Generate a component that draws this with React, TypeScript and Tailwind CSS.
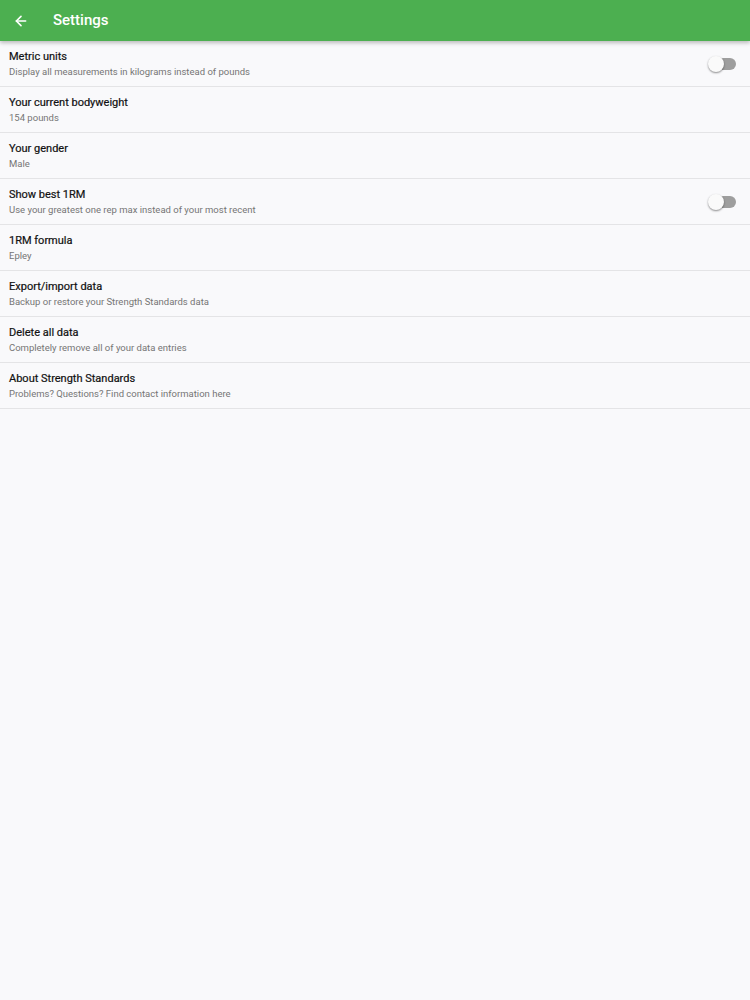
import { ArrowLeft } from "lucide-react";

type Item = { title: string; subtitle: string; toggle?: boolean };

const items: Item[] = [
  { title: "Metric units", subtitle: "Display all measurements in kilograms instead of pounds", toggle: true },
  { title: "Your current bodyweight", subtitle: "154 pounds" },
  { title: "Your gender", subtitle: "Male" },
  { title: "Show best 1RM", subtitle: "Use your greatest one rep max instead of your most recent", toggle: true },
  { title: "1RM formula", subtitle: "Epley" },
  { title: "Export/import data", subtitle: "Backup or restore your Strength Standards data" },
  { title: "Delete all data", subtitle: "Completely remove all of your data entries" },
  { title: "About Strength Standards", subtitle: "Problems? Questions? Find contact information here" },
];

function Toggle() {
  return (
    <div className="relative mr-[14px] h-[12px] w-[26px]">
      <div className="h-[12px] w-[26px] rounded-full bg-[#9e9e9e]" />
      <div className="absolute left-[-2px] top-[-2px] h-[16px] w-[16px] rounded-full bg-[#fafafa] shadow-[0_1px_2px_rgba(0,0,0,0.45)]" />
    </div>
  );
}

export default function App() {
  return (
    <div className="min-h-[1000px] w-[750px] bg-[#f9f9fb] font-['Roboto','Liberation_Sans',sans-serif]">
      {/* Top bar */}
      <header className="relative z-10 flex h-[41px] items-center bg-[#4caf50] shadow-[0_2px_4px_rgba(0,0,0,0.25)]">
        <ArrowLeft className="ml-[13px] h-[16px] w-[16px] text-white" strokeWidth={2.4} />
        <h1 className="ml-[24px] text-[15px] font-medium text-white">Settings</h1>
      </header>

      {/* Settings list */}
      <ul>
        {items.map((item) => (
          <li
            key={item.title}
            className="flex h-[46px] items-center justify-between border-b border-[#e4e4e6] pl-[9px]"
          >
            <div className="flex flex-col">
              <span className="text-[11px] leading-[16px] text-[#111111] [-webkit-text-stroke:0.2px_#111111]">
                {item.title}
              </span>
              <span className="text-[9.5px] leading-[13px] text-[#757575]">{item.subtitle}</span>
            </div>
            {item.toggle && <Toggle />}
          </li>
        ))}
      </ul>
    </div>
  );
}
